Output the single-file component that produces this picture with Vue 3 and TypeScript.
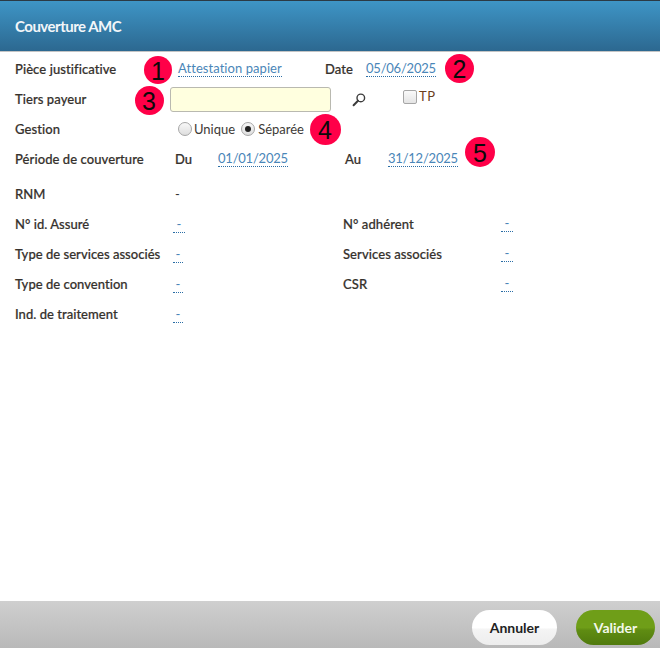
<script setup lang="ts">
const markers = [
  { n: 1, x: 158, y: 70, size: 28 },
  { n: 2, x: 459.5, y: 68, size: 29 },
  { n: 3, x: 149, y: 100.5, size: 29 },
  { n: 4, x: 325, y: 129, size: 31 },
  { n: 5, x: 480, y: 152, size: 30 },
];

const details = [
  { left: "N° id. Assuré", right: "N° adhérent", wide: true },
  { left: "Type de services associés", right: "Services associés", wide: false },
  { left: "Type de convention", right: "CSR", wide: false },
  { left: "Ind. de traitement", right: "", wide: false },
];
</script>

<template>
  <div class="dialog">
    <header class="dialog__header">Couverture AMC</header>

    <main class="dialog__body">
      <div class="row">
        <span class="label label--first">Pièce justificative</span>
        <a class="value value--doc">Attestation papier</a>
        <span class="label label--date">Date</span>
        <a class="value value--date">05/06/2025</a>
      </div>

      <div class="row">
        <span class="label label--input">Tiers payeur</span>
        <input class="field" type="text" />
        <svg class="search" width="16" height="16" viewBox="0 0 16 16" aria-hidden="true">
          <circle cx="9.8" cy="5.9" r="3.8" fill="none" stroke="#3c3c3c" stroke-width="1.4" />
          <path d="M7 8.8 2.6 13.2" stroke="#3c3c3c" stroke-width="2" stroke-linecap="round" />
        </svg>
        <span class="check"></span>
        <span class="check-label">TP</span>
      </div>

      <div class="row">
        <span class="label label--radio">Gestion</span>
        <span class="radio"></span>
        <span class="option">Unique</span>
        <span class="radio radio--on"></span>
        <span class="option">Séparée</span>
      </div>

      <div class="row">
        <span class="label label--period">Période de couverture</span>
        <span class="label label--du">Du</span>
        <a class="value value--date">01/01/2025</a>
        <span class="label label--au">Au</span>
        <a class="value value--date">31/12/2025</a>
      </div>

      <div class="row row--rnm">
        <span class="label label--detail">RNM</span>
        <span class="plain">-</span>
      </div>

      <div v-for="d in details" :key="d.left" class="row">
        <span class="label label--dash">{{ d.left }}</span>
        <span class="cell-left"><a class="dash" :class="{ 'dash--wide': d.wide }">-</a></span>
        <template v-if="d.right">
          <span class="label label--right">{{ d.right }}</span>
          <a class="dash dash--wide">-</a>
        </template>
      </div>
    </main>

    <footer class="dialog__footer">
      <button class="btn btn--cancel" type="button">Annuler</button>
      <button class="btn btn--ok" type="button">Valider</button>
    </footer>

    <span
      v-for="m in markers"
      :key="m.n"
      class="marker"
      :style="{
        left: m.x - m.size / 2 + 'px',
        top: m.y - m.size / 2 + 'px',
        width: m.size + 'px',
        height: m.size + 'px',
      }"
      >{{ m.n }}</span
    >
  </div>
</template>

<style>
html,
body {
  margin: 0;
  background: #fff;
}
</style>

<style scoped>
.dialog {
  position: relative;
  width: 660px;
  height: 648px;
  display: flex;
  flex-direction: column;
  overflow: hidden;
  background: #fff;
  font-family: Lato, "Liberation Sans", sans-serif;
  font-size: 13px;
  color: #333;
}

.dialog__header {
  flex: none;
  box-sizing: border-box;
  height: 52px;
  padding: 0 15px 1px;
  display: flex;
  align-items: center;
  border-top: 1px solid #2b3a45;
  border-bottom: 1px solid #c4c4c4;
  background: linear-gradient(#3e95c6, #2c6890);
  color: #f2f6f9;
  font-size: 15px;
  font-weight: 700;
  letter-spacing: -0.5px;
}

.dialog__body {
  flex: 1;
  padding-top: 2px;
}

.row {
  height: 30px;
  display: flex;
  align-items: center;
  padding-left: 15px;
}

.row--rnm {
  margin-top: 5px;
}

.label {
  flex: none;
  font-weight: 500;
  color: #36312d;
  letter-spacing: 0.08px;
  -webkit-text-stroke: 0.2px #36312d;
}

.label--first {
  width: 163px;
}

.label--date {
  width: 41px;
  margin-left: 43px;
}

.label--input {
  width: 155px;
}

.label--radio {
  width: 163px;
}

.label--period {
  width: 160px;
}

.label--du {
  width: 43px;
}

.label--au {
  width: 43px;
  margin-left: 57px;
}

.label--detail {
  width: 160px;
}

.label--dash {
  width: 158px;
  letter-spacing: 0.03px;
  white-space: nowrap;
}

.label--right {
  width: 159px;
}

.value {
  flex: none;
  color: #4a86b8;
  border-bottom: 1px dotted #2b6ea6;
  line-height: 15px;
}

.value--doc {
  width: 104px;
  letter-spacing: 0.06px;
}

.value--date {
  width: 70px;
  letter-spacing: -0.22px;
}

.field {
  flex: none;
  box-sizing: border-box;
  width: 161px;
  height: 25px;
  padding: 0;
  border: 1px solid #b9b9b0;
  border-radius: 3px;
  background: #ffffdf;
  outline: none;
}

.search {
  flex: none;
  margin-left: 20px;
  margin-top: 2px;
}

.check {
  flex: none;
  box-sizing: border-box;
  width: 14px;
  height: 14px;
  margin-left: 36px;
  margin-top: -5px;
  border: 1px solid #a6a6a6;
  border-radius: 2px;
  background: linear-gradient(#fafafa, #e4e4e4);
}

.check-label {
  margin-left: 2px;
  margin-top: -6px;
  color: #6b3f1e;
  letter-spacing: 0.5px;
}

.radio {
  flex: none;
  box-sizing: border-box;
  width: 14px;
  height: 14px;
  border: 1px solid #a6a6a6;
  border-radius: 50%;
  background: linear-gradient(#f8f8f8, #dedede);
}

.radio--on {
  display: flex;
  align-items: center;
  justify-content: center;
  margin-left: 6px;
}

.radio--on::after {
  content: "";
  width: 6px;
  height: 6px;
  border-radius: 50%;
  background: #222;
}

.option {
  flex: none;
  margin-left: 2px;
  color: #3d3a36;
}

.option:last-child {
  margin-left: 3px;
}

.plain {
  color: #333;
}

.cell-left {
  flex: none;
  width: 170px;
}

.dash {
  display: inline-block;
  width: 10px;
  text-align: center;
  color: #4a86b8;
  border-bottom: 1px dotted #2b6ea6;
  line-height: 15px;
}

.dash--wide {
  width: 12px;
}

.label--right + .dash {
  margin-left: -1px;
}

.dialog__footer {
  flex: none;
  box-sizing: border-box;
  height: 47px;
  padding: 9px 5px 3px 0;
  display: flex;
  justify-content: flex-end;
  gap: 19px;
  background: linear-gradient(#cfcfcf, #b9b9b9);
}

.btn {
  width: 85px;
  height: 35px;
  padding: 0;
  border: none;
  border-radius: 18px;
  font-family: inherit;
  font-size: 14px;
  font-weight: 700;
}

.btn--cancel {
  background: linear-gradient(#fff 50%, #f4f4f4 56%, #ededed);
  color: #222;
}

.btn--ok {
  width: 79px;
  background: linear-gradient(#6f9e18 50%, #5f8c12 58%, #507a0e);
  color: #f4f8ec;
}

.marker {
  box-sizing: border-box;
  position: absolute;
  display: flex;
  align-items: center;
  justify-content: center;
  padding-top: 2px;
  border-radius: 50%;
  background: #ff0048;
  color: #0a0a0a;
  font-family: "Liberation Sans", Arial, sans-serif;
  font-size: 25px;
  line-height: 1;
}
</style>
